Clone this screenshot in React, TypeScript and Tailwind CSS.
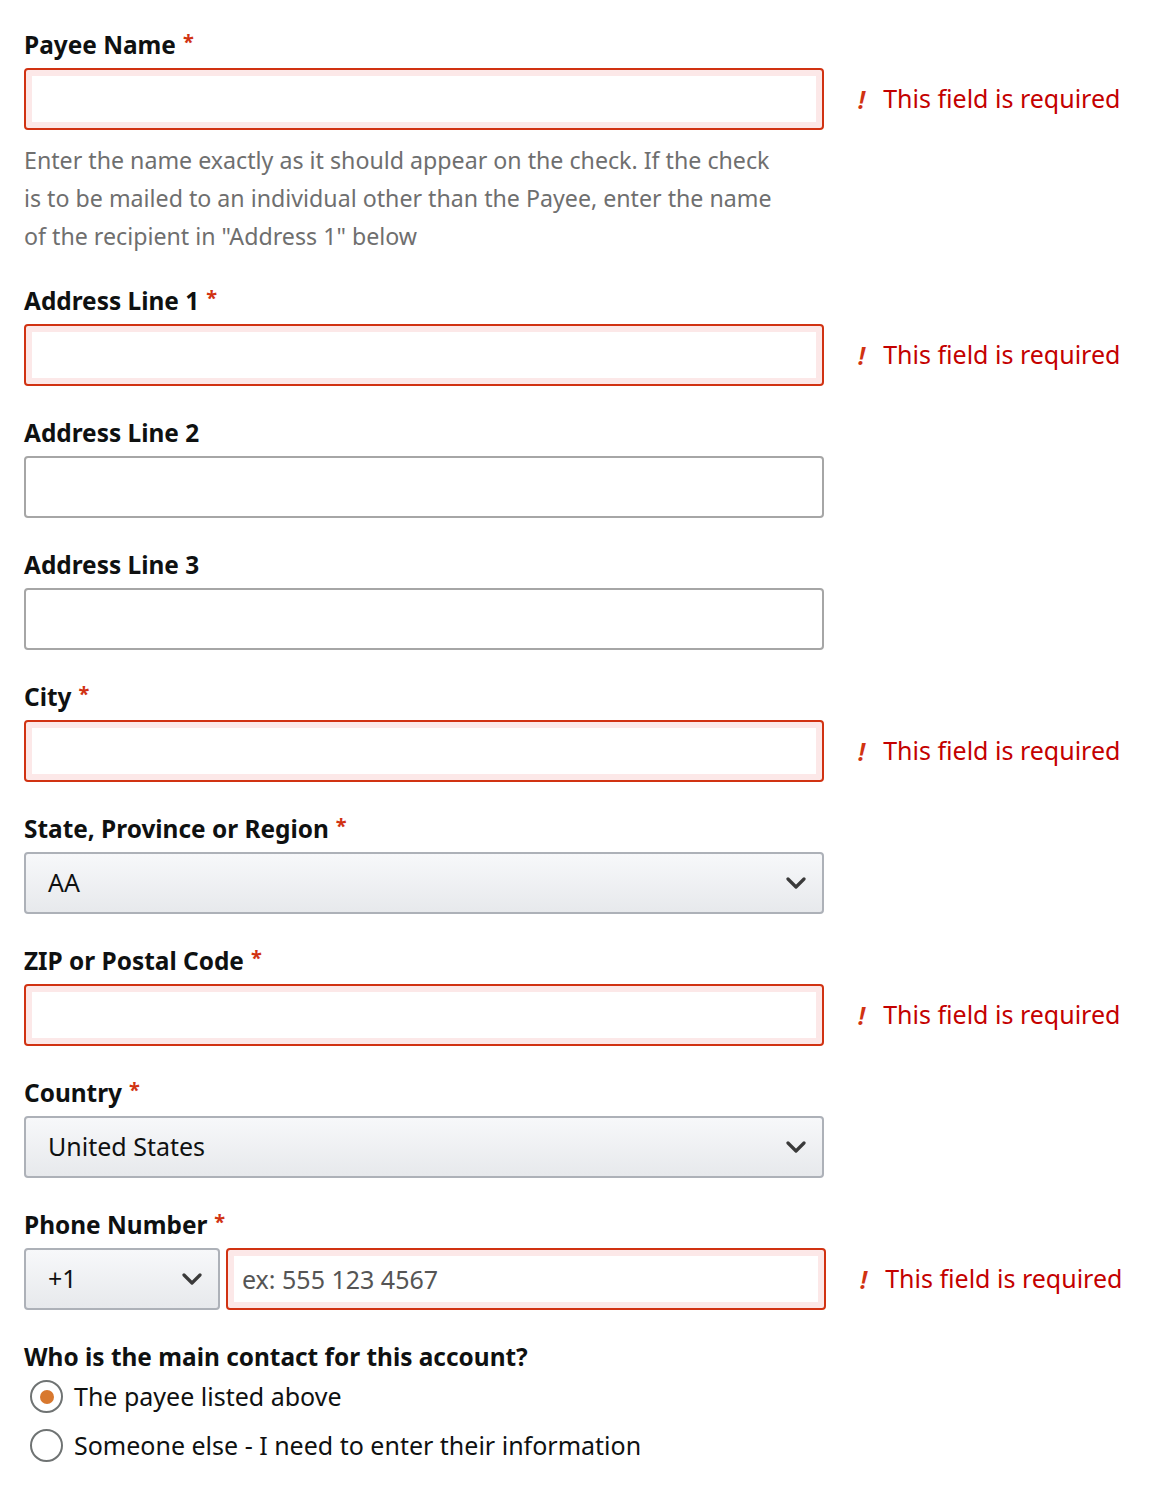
import React from "react";

const FONT = { fontFamily: '"Noto Sans", "Liberation Sans", sans-serif' };

const Label = ({ text, required }: { text: string; required?: boolean }) => (
  <div className="h-[34px] flex items-center text-[24.4px] font-bold text-[#0f1111] leading-none">
    {text}
    {required && <span className="ml-[7px] text-[#d13212] text-[20px] -mt-[6px]">*</span>}
  </div>
);

const ErrorMsg = () => (
  <div className="flex items-center ml-[34px] text-[#c40000] text-[25px] whitespace-nowrap">
    <span className="italic font-semibold text-[#d13212] mr-[18px] text-[26px]">!</span>
    This field is required
  </div>
);

const TextInput = ({ error, placeholder, className = "w-[800px]" }: { error?: boolean; placeholder?: string; className?: string }) => (
  <input
    placeholder={placeholder}
    className={
      "h-[62px] rounded-[4px] px-[14px] text-[25px] text-[#0f1111] placeholder:text-[#555] outline-none bg-white " +
      className +
      (error
        ? " border-2 border-[#d13212] shadow-[inset_0_0_0_6px_#fce8e8]"
        : " border-2 border-[#a6a6a6]")
    }
  />
);

const Chevron = () => (
  <svg width="20" height="14" viewBox="0 0 20 14" className="text-[#3a3a3a]">
    <path d="M2 3 L10 11 L18 3" fill="none" stroke="currentColor" strokeWidth="3.2" strokeLinecap="round" strokeLinejoin="round" />
  </svg>
);

const Select = ({ value, className = "w-[800px]" }: { value: string; className?: string }) => (
  <div
    className={
      "h-[62px] rounded-[4px] border-2 border-[#adb1b8] bg-gradient-to-b from-[#f7f8fa] to-[#e7e9ec] flex items-center justify-between pl-[22px] pr-[16px] text-[25px] text-[#0f1111] " +
      className
    }
  >
    <span>{value}</span>
    <Chevron />
  </div>
);

const Field = ({ label, required, error }: { label: string; required?: boolean; error?: boolean }) => (
  <div className="mt-[30px]">
    <Label text={label} required={required} />
    <div className="flex items-center mt-[6px]">
      <TextInput error={error} />
      {error && <ErrorMsg />}
    </div>
  </div>
);

const Radio = ({ checked, label }: { checked?: boolean; label: string }) => (
  <div className="flex items-center h-[49px]">
    <div className="w-[33px] h-[33px] ml-[30px] rounded-full border-2 border-[#6f7373] flex items-center justify-center bg-white">
      {checked && <div className="w-[14px] h-[14px] rounded-full bg-[#d8782e]" />}
    </div>
    <span className="ml-[11px] text-[25px] text-[#0f1111]">{label}</span>
  </div>
);

export default function App() {
  return (
    <div className="bg-white w-[1158px] min-h-[1494px] pl-[24px] pt-[28px]" style={FONT}>
      <Label text="Payee Name" required />
      <div className="flex items-center mt-[6px]">
        <TextInput error />
        <ErrorMsg />
      </div>
      <p className="mt-[11px] text-[23.2px] leading-[38px] text-[#6f6f6f]">
        Enter the name exactly as it should appear on the check. If the check
        <br />
        is to be mailed to an individual other than the Payee, enter the name
        <br />
        of the recipient in "Address 1" below
      </p>

      <div className="mt-[29px]">
        <Label text="Address Line 1" required />
        <div className="flex items-center mt-[6px]">
          <TextInput error />
          <ErrorMsg />
        </div>
      </div>
      <Field label="Address Line 2" />
      <Field label="Address Line 3" />
      <Field label="City" required error />

      <div className="mt-[30px]">
        <Label text="State, Province or Region" required />
        <div className="mt-[6px]">
          <Select value="AA" />
        </div>
      </div>

      <Field label="ZIP or Postal Code" required error />

      <div className="mt-[30px]">
        <Label text="Country" required />
        <div className="mt-[6px]">
          <Select value="United States" />
        </div>
      </div>

      <div className="mt-[30px]">
        <Label text="Phone Number" required />
        <div className="flex items-center mt-[6px]">
          <Select value="+1" className="w-[196px]" />
          <TextInput error placeholder="ex: 555 123 4567" className="w-[600px] ml-[6px]" />
          <ErrorMsg />
        </div>
      </div>

      <div className="mt-[30px]">
        <Label text="Who is the main contact for this account?" />
        <div className="mt-[-2px] -ml-[24px]">
          <Radio checked label="The payee listed above" />
          <Radio label="Someone else - I need to enter their information" />
        </div>
      </div>
    </div>
  );
}
